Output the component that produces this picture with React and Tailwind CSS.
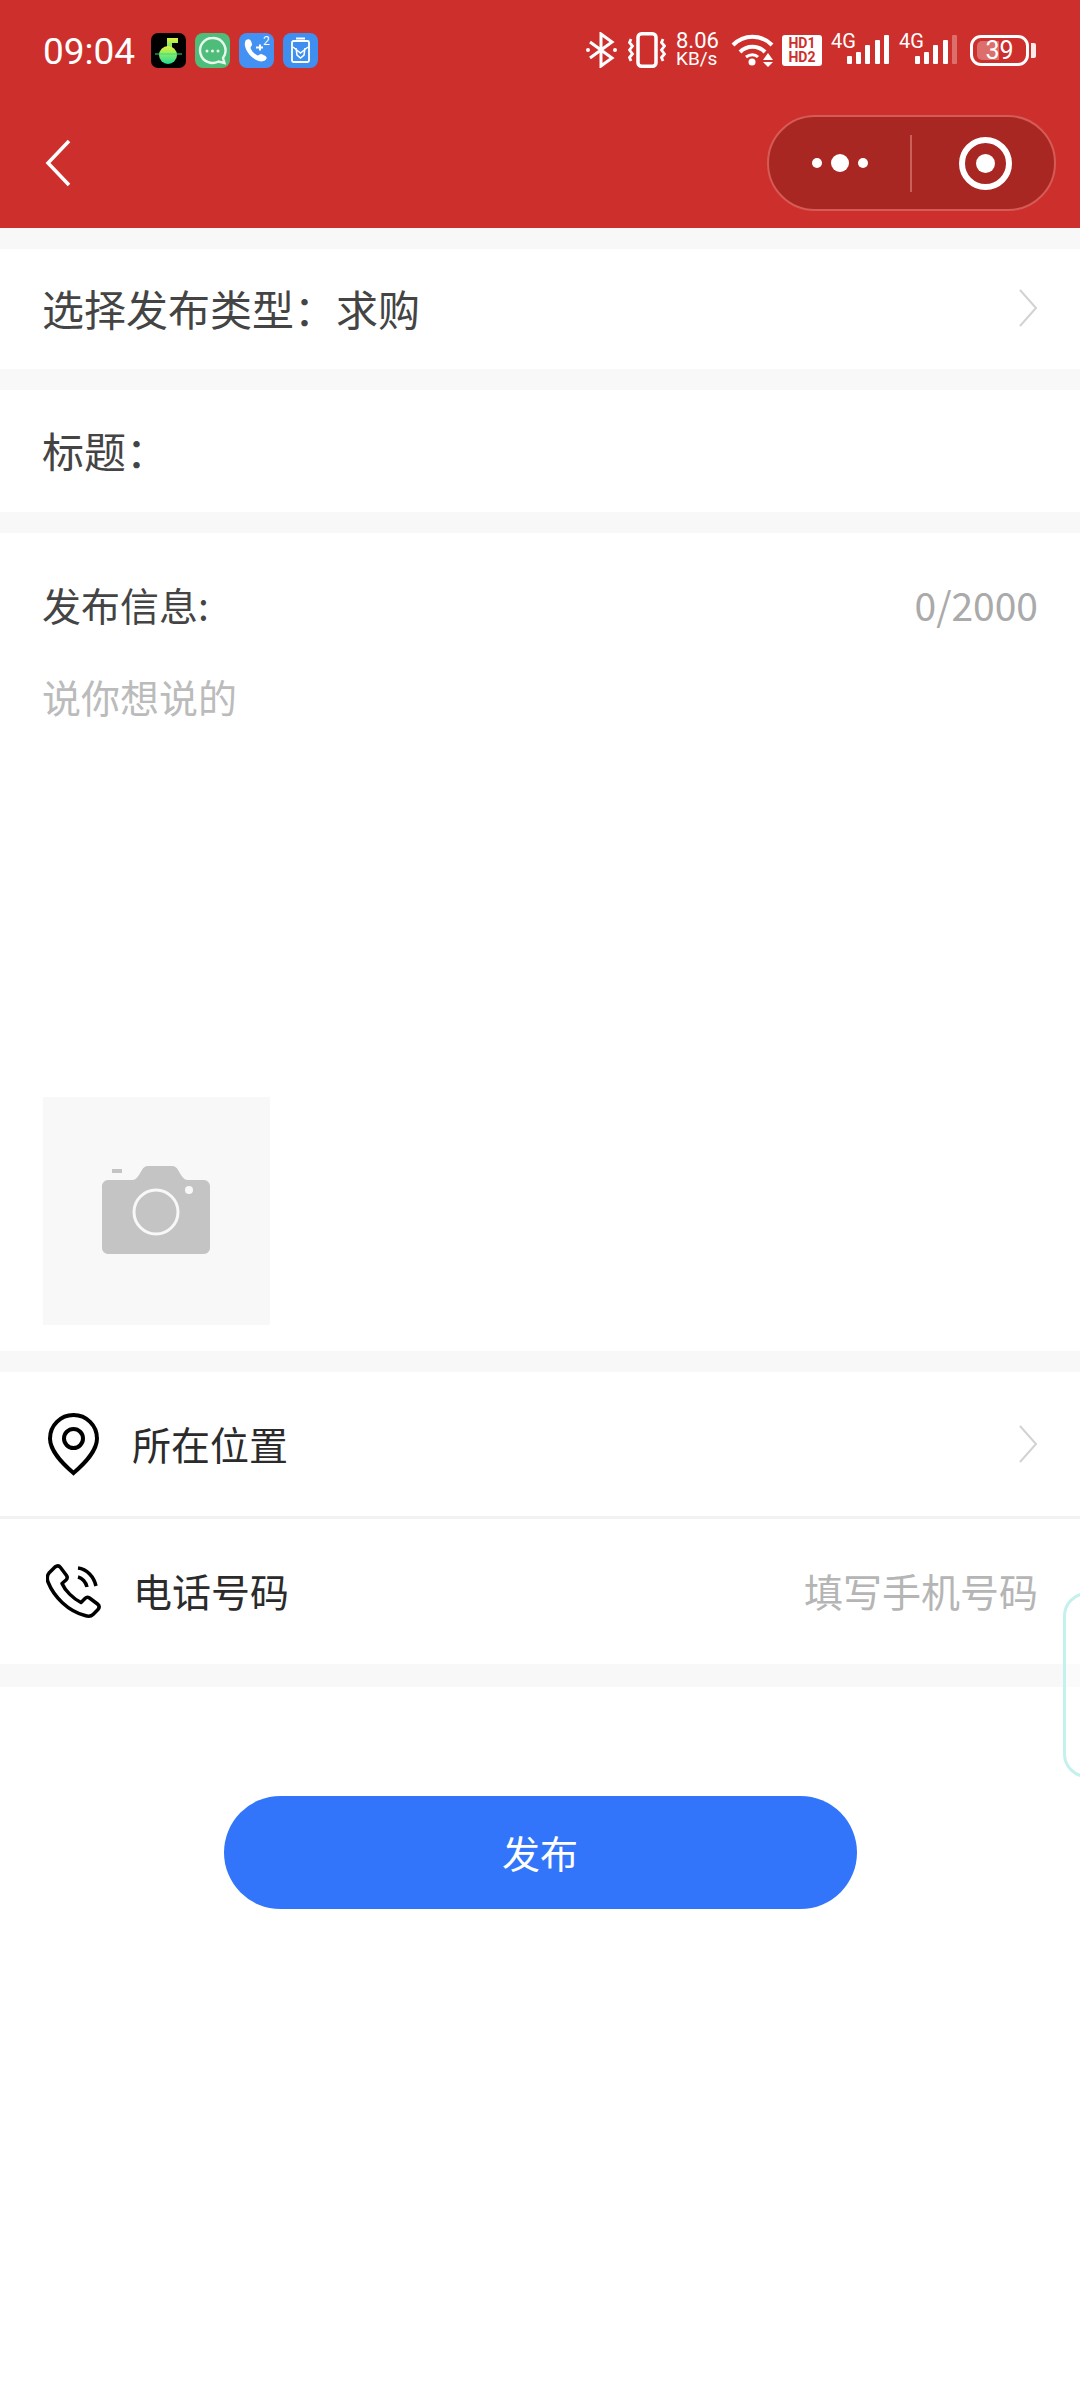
const cjk = "font-['Noto_Sans_CJK_SC','Noto_Sans',sans-serif]";

function Chevron() {
  return (
    <svg width="20" height="38" viewBox="0 0 20 38" fill="none" stroke="#d2d2d2" strokeWidth="2">
      <path d="M2 1l16 18L2 37" />
    </svg>
  );
}

function AppIcons() {
  return (
    <div className="flex items-center gap-[9px] ml-[16px]">
      <svg width="35" height="35" viewBox="0 0 35 35">
        <defs>
          <linearGradient id="note" x1="0" y1="0" x2="0" y2="1">
            <stop offset="0" stopColor="#e4f33c" />
            <stop offset="1" stopColor="#1fdc9a" />
          </linearGradient>
        </defs>
        <rect width="35" height="35" rx="7" fill="#000" />
        <path d="M16 5h11v5h-6v10h-5z" fill="url(#note)" />
        <path d="M8 22a9 9 0 0 1 18 0a9 9 0 0 1-18 0z" fill="url(#note)" />
        <path d="M4 21h27" stroke="#2de07e" strokeWidth="1" />
      </svg>
      <svg width="35" height="35" viewBox="0 0 35 35">
        <rect width="35" height="35" rx="8" fill="#4fbd7a" />
        <path d="M17.5 5a12.5 12.5 0 1 0 6 23.5l6 1.5-1.5-5A12.5 12.5 0 0 0 17.5 5z" fill="none" stroke="#e8f7ee" strokeWidth="2.4" />
        <circle cx="12" cy="18" r="1.5" fill="#e8f7ee" />
        <circle cx="17.5" cy="18" r="1.5" fill="#e8f7ee" />
        <circle cx="23" cy="18" r="1.5" fill="#e8f7ee" />
      </svg>
      <svg width="35" height="35" viewBox="0 0 35 35">
        <rect width="35" height="35" rx="8" fill="#4291f3" />
        <path d="M7 7c2-1.500 4-1 5 1l1 3c.5 1.500-1.500 2.500-1.500 4 1 3 4 6 7 7.500 1.500 0 2.500-2 4-1.500l4 2c1.500 1 1.500 3 0 4-3 2.500-7 1.500-11-1C11 23 7 18 6 13c-.5-2.500 0-4.500 1-6z" fill="#fff" />
        <path d="M17 14.500h7M21 11.500v6" stroke="#fff" strokeWidth="2" />
        <text x="24" y="12" fontSize="12" fill="#fff" fontFamily="Roboto">2</text>
      </svg>
      <svg width="35" height="35" viewBox="0 0 35 35">
        <rect width="35" height="35" rx="8" fill="#3f8ff0" />
        <rect x="9" y="8" width="17" height="21" rx="1.500" fill="none" stroke="#fff" strokeWidth="1.800" />
        <path d="M13 5.500h9" stroke="#fff" strokeWidth="2" />
        <path d="M10 14l7.500 6 7.500-6M13 15l1 7 3.500 3 3.500-3 1-7" fill="none" stroke="#fff" strokeWidth="1.500" />
      </svg>
    </div>
  );
}

function Signal({ dim }) {
  return (
    <svg width="60" height="42" viewBox="0 -4 60 42" fill="#fff">
      <text x="1" y="15" fontSize="20" fontFamily="Roboto">4G</text>
      <rect x="17" y="23" width="5" height="8" rx="1" />
      <rect x="26" y="19" width="5" height="12" rx="1" />
      <rect x="35" y="12" width="5" height="19" rx="1" />
      <rect x="45" y="7" width="5" height="24" rx="1" />
      <rect x="54" y="2" width="5" height="29" rx="1" opacity={dim ? 0.3 : 1} />
    </svg>
  );
}

function StatusRight() {
  return (
    <div className="flex items-center text-white">
      {/* bluetooth */}
      <svg width="31" height="36" viewBox="0 0 31 36" fill="none" stroke="#fff" strokeWidth="3">
        <path d="M4 10l22 16-11 8V2l11 8L4 26" />
        <circle cx="2" cy="18" r="2" fill="#fff" stroke="none" />
        <circle cx="29" cy="18" r="2" fill="#fff" stroke="none" />
      </svg>
      {/* vibrate */}
      <svg className="ml-[11px]" width="38" height="36" viewBox="0 0 38 36" fill="none" stroke="#fff" strokeWidth="3.500">
        <rect x="10" y="1.800" width="18" height="32.400" rx="3.500" />
        <path d="M3 7l-1.500 3.500 3 3.500-3 4 3 4-3 3.500L3 29M35 7l-1.500 3.500 3 3.500-3 4 3 4-3 3.500 1.500 3.500" strokeWidth="2.800" />
      </svg>
      <div className="ml-[10px] w-[42px] font-['Roboto',sans-serif] flex flex-col">
        <span className="text-[22px] leading-[18px]">8.06</span>
        <span className="text-[19px] leading-[18px]">KB/s</span>
      </div>
      {/* wifi */}
      <svg className="ml-[13px]" width="43" height="34" viewBox="0 0 43 34" fill="none" stroke="#fff" strokeWidth="4">
        <path d="M2 12c11-11 28-11 39 0" />
        <path d="M9 19c7-7 18-7 25 0" />
        <path d="M15 24c4-3 9-3 12 0" strokeWidth="3" />
        <circle cx="21" cy="29" r="3.500" fill="#fff" stroke="none" />
        <path d="M37 20l5 7H32zM32 29h10l-5 5z" fill="#fff" stroke="none" />
      </svg>
      <div className="ml-[8px] w-[40px] h-[31px] bg-white rounded-[3px] flex flex-col items-center justify-center font-['Roboto',sans-serif] font-bold text-[14px] leading-[14px] text-[#cd302c]">
        <span>HD1</span>
        <span>HD2</span>
      </div>
      <div className="ml-[8px] flex items-center gap-[8px]">
        <Signal />
        <Signal dim />
      </div>
      {/* battery */}
      <div className="ml-[12px] flex items-center">
        <div className="relative w-[59px] h-[31px] border-[3px] border-white rounded-[11px] overflow-hidden flex items-center justify-center font-['Roboto',sans-serif] text-[25px] leading-none">
          <div className="absolute left-[4px] top-[3px] bottom-[3px] w-[22px] bg-white/30 rounded-l-[5px]"></div>
          <span className="relative">39</span>
        </div>
        <div className="ml-[2px] w-[5px] h-[15px] bg-white/90 rounded-r-[2px]"></div>
      </div>
    </div>
  );
}

function Capsule() {
  return (
    <div className="w-[289px] h-[96px] rounded-full bg-[#a82723] border-2 border-[#d65a55] flex items-center">
      <div className="w-[141px] flex items-center justify-center gap-[9px]">
        <span className="w-[10px] h-[10px] rounded-full bg-white"></span>
        <span className="w-[18px] h-[18px] rounded-full bg-white"></span>
        <span className="w-[10px] h-[10px] rounded-full bg-white"></span>
      </div>
      <div className="w-[2px] h-[57px] bg-[#c9605a]"></div>
      <div className="flex-1 pl-[4px] flex items-center justify-center">
        <div className="w-[53px] h-[53px] rounded-full border-[6px] border-white flex items-center justify-center">
          <span className="w-[19px] h-[19px] rounded-full bg-white"></span>
        </div>
      </div>
    </div>
  );
}

function Gap({ h }) {
  return <div className={`bg-[#f8f8f8] ${h}`}></div>;
}

export default function App() {
  return (
    <div className={`relative w-[1080px] h-[2400px] bg-white overflow-hidden ${cjk}`}>
      <header className="h-[228px] bg-[#cd302c] pt-[32px] pl-[43px] pr-[44px]">
        <div className="flex items-center justify-between h-[36px]">
          <div className="flex items-center">
            <span className="font-['Roboto',sans-serif] text-[37px] leading-none text-white pt-[3px]">09:04</span>
            <AppIcons />
          </div>
          <StatusRight />
        </div>
        <div className="mt-[47px] flex items-center justify-between mr-[-20px]">
          <svg width="26" height="48" viewBox="0 0 26 48" fill="none" stroke="#fff" strokeWidth="3.500" className="ml-[2px]">
            <path d="M24 2L3 24l21 22" />
          </svg>
          <Capsule />
        </div>
      </header>

      <Gap h="h-[21px]" />
      <div className="h-[120px] pl-[42px] pr-[42px] pb-[3px] flex items-center justify-between">
        <span className="text-[42px] text-[#444]">{"选择发布类型\uFF1A求购"}</span>
        <Chevron />
      </div>
      <Gap h="h-[21px]" />
      <div className="h-[122px] pl-[42px] pb-[3px] flex items-center">
        <span className="text-[42px] text-[#444]">{"标题\uFF1A"}</span>
      </div>
      <Gap h="h-[21px]" />

      <section className="h-[818px] pl-[42px] pr-[42px] pt-[44px] flex flex-col">
        <div className="flex items-center justify-between h-[54px]">
          <span className="text-[39px] text-[#444]">发布信息:</span>
          <span className="text-[39px] text-[#aaa]">0/2000</span>
        </div>
        <p className="mt-[38px] text-[39px] leading-[54px] text-[#bbb]">说你想说的</p>
        <div className="mt-auto mb-[26px] ml-[1px] w-[227px] h-[228px] bg-[#f8f8f8] flex items-center justify-center">
          <svg className="mr-[2px] mb-[2px]" width="108" height="88" viewBox="0 0 108 88">
            <path d="M6 14h24c3 0 5-2 7-5l3-5c1-2 3-4 6-4h24c3 0 5 2 6 4l3 5c2 3 4 5 7 5h16c3 0 6 3 6 6v62c0 3-3 6-6 6H6c-3 0-6-3-6-6V20c0-3 3-6 6-6z" fill="#c4c4c4" />
            <rect x="10" y="3" width="10" height="4" fill="#c4c4c4" />
            <circle cx="54" cy="46" r="22" fill="none" stroke="#f8f8f8" strokeWidth="3" />
            <circle cx="87" cy="24" r="4" fill="#f8f8f8" />
          </svg>
        </div>
      </section>

      <Gap h="h-[21px]" />
      <div className="h-[147px] pl-[48px] pr-[42px] flex items-center border-b-[3px] border-[#f2f2f2]">
        <svg width="51" height="63" viewBox="0 0 51 63" fill="none" stroke="#000" strokeWidth="4">
          <path d="M25.500 60C14 50 2 38 2 25.500a23.500 23.500 0 0 1 47 0C49 38 37 50 25.500 60z" />
          <circle cx="25.500" cy="25.500" r="9.500" />
        </svg>
        <span className="ml-[33px] pb-[2px] text-[39px] text-[#2b2b2b] flex-1">所在位置</span>
        <Chevron />
      </div>
      <div className="h-[145px] pl-[46px] pr-[42px] flex items-center">
        <svg width="56" height="56" viewBox="0 0 56 56" fill="none" stroke="#000" strokeWidth="3.500" strokeLinejoin="round">
          <path d="M3 9l6-6c2-1.500 4-1.500 5.500.500l6 8c1 1.500 1 3-.5 4.500l-4 3.500c3 7 11 15 19 19l4-4c1.500-1.500 3-1.500 4.500-.5l8 6c2 1.500 2 3.500.5 5.500l-5 5c-2 2-5 2-8 1C22 47 8 33 2 18c-1-3-1-6.500 1-9z" />
          <path d="M32 13c4 1 8 5 9 10M32 4c9 1 16 9 18 18" />
        </svg>
        <span className="ml-[31px] pb-[2px] text-[39px] text-[#2b2b2b] flex-1">电话号码</span>
        <span className="pb-[2px] text-[39px] text-[#b5b5b5]">填写手机号码</span>
      </div>
      <Gap h="h-[23px]" />

      <div className="mt-[109px] flex justify-center">
        <button className="w-[633px] h-[113px] pb-[2px] rounded-full bg-[#3275fb] text-white text-[38px]">发布</button>
      </div>

      {/* floating handle on the right edge */}
      <div className="absolute left-[1063px] top-[1592px] w-[40px] h-[186px] rounded-l-[24px] border-[3px] border-[#c4f0ee] bg-white/40"></div>
    </div>
  );
}
